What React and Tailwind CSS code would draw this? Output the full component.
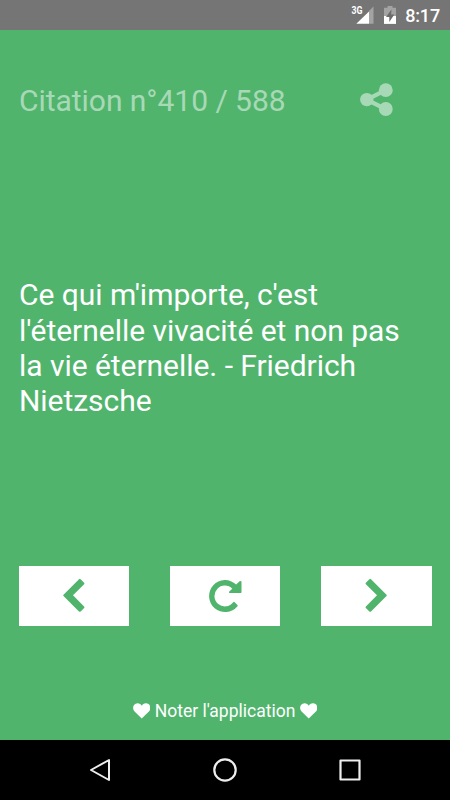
function StatusBar() {
  return (
    <header className="flex h-[30px] items-center justify-end bg-[#757575] pr-[10px] text-white">
      <svg width="50" height="30" viewBox="0 0 50 30" role="img" aria-label="3G, batterie en charge">
        <path d="M22.500 6.500L18 11V23.700H22.500Z" fill="#a3a3a3" />
        <path d="M18 11.500V23.700H5.300Z" fill="#fff" />
        <text x="0.500" y="14" fill="#fff" fontSize="10" fontWeight="700" textLength="11" lengthAdjust="spacingAndGlyphs" className="font-[Roboto]">3G</text>
        <path d="M36.500 6H41.500V7.700H45V16H33V7.700H36.500Z" fill="#a3a3a3" />
        <path d="M33 16H45V23.900H33Z" fill="#fff" />
        <path d="M40.500 9.500L35 17H38.300V22L43.300 14.600H40.100Z" fill="#6b6b6b" />
      </svg>
      <span className="ml-[4px] pt-[2px] text-[18px] leading-[28px] font-medium tracking-[-0.15px]">8:17</span>
    </header>
  );
}

function ShareIcon() {
  return (
    <svg width="34" height="34" viewBox="0 0 34 34" fill="#a8d9b6" aria-hidden="true">
      <path d="M25.700 7.200L6.700 16.700L25.700 26.200" fill="none" stroke="#a8d9b6" strokeWidth="4.200" />
      <circle cx="6.800" cy="16.600" r="6.700" />
      <circle cx="25.800" cy="7.200" r="6.900" />
      <circle cx="25.800" cy="26" r="6.900" />
    </svg>
  );
}

function ChevronLeft() {
  return (
    <svg width="22" height="36" viewBox="0 0 22 36" fill="#51b46d" aria-hidden="true">
      <path d="M0.500 16.700L16 1.200Q16.800 0.500 17.600 1.200L21.100 4.700Q21.800 5.500 21.100 6.300L10 17.300L21.100 28.400Q21.800 29.200 21.100 30L17.600 33.500Q16.800 34.200 16 33.500L0.500 18Q-0.100 17.350 0.500 16.700Z" />
    </svg>
  );
}

function Reload() {
  return (
    <svg width="34" height="34" viewBox="0 0 34 34" fill="#51b46d" aria-hidden="true">
      <path d="M27.200 5.600A16 16 0 1 0 28.500 27.200Q29 26.500 28.400 25.900L25.700 23.200Q24.900 22.500 24.200 23.200A10.400 10.400 0 1 1 23.300 9.700L20.300 12.500Q19.800 13.100 20.300 14.100H31.300Q32.500 14.100 32.500 12.900V2.600Q31.500 1.600 30.600 2.300Z" />
    </svg>
  );
}

function NavButton({ label, children }) {
  return (
    <button type="button" aria-label={label} className="flex h-[60px] w-[110.500px] items-center justify-center bg-white">
      {children}
    </button>
  );
}

function Heart() {
  return (
    <svg width="17.500" height="16" viewBox="0 0 18 16" fill="#fff" aria-hidden="true">
      <path d="M9 15.700L1.600 8.400C-1.100 5.400 0 0.200 4.700 0.100C6.700 0.100 8.300 1.500 9 2.600C9.700 1.500 11.300 0.100 13.300 0.100C18 0.200 19.100 5.400 16.400 8.400Z" />
    </svg>
  );
}

export default function App() {
  return (
    <div className="flex h-[800px] w-[450px] flex-col overflow-hidden bg-[#51b46d] font-[Roboto,sans-serif] text-white">
      <StatusBar />
      <main className="flex h-[710px] flex-col">
        <div className="flex h-[140px] items-center justify-between pr-[56px] pl-[19px]">
          <h1 className="pt-px text-[30px] leading-[35px] tracking-[-0.04px] text-[#a8d9b6]">Citation n°410 / 588</h1>
          <button type="button" aria-label="Partager"><ShareIcon /></button>
        </div>
        <div className="flex h-[356px] items-center pl-[19px]">
          <p className="text-[30px] leading-[35.300px] tracking-[-0.04px] whitespace-nowrap">
            Ce qui m'importe, c'est<br />
            l'éternelle vivacité et non pas<br />
            la vie éternelle. - Friedrich<br />
            Nietzsche
          </p>
        </div>
        <div className="mt-[40px] flex justify-between pr-[18.500px] pl-[18.500px]">
          <NavButton label="Précédente"><span className="pl-[0.500px]"><ChevronLeft /></span></NavButton>
          <NavButton label="Aléatoire"><span className="pl-[1.500px]"><Reload /></span></NavButton>
          <NavButton label="Suivante"><span className="pr-px"><span className="block -scale-x-100"><ChevronLeft /></span></span></NavButton>
        </div>
        <button type="button" className="mt-[73px] flex items-center justify-center gap-[4.500px] text-[17.500px] leading-[22px]">
          <Heart /><span className="pt-px">Noter l'application</span><Heart />
        </button>
      </main>
      <nav className="flex h-[60px] items-center justify-between bg-black px-[88px]">
        <svg width="24" height="28" viewBox="0 0 24 28" fill="none" stroke="#eee" strokeWidth="2" strokeLinejoin="round" aria-label="Retour">
          <path d="M21 4V24L3 14Z" />
        </svg>
        <svg width="26" height="26" viewBox="0 0 26 26" fill="none" stroke="#eee" strokeWidth="2.200" aria-label="Accueil">
          <circle cx="13" cy="13" r="10.700" />
        </svg>
        <svg width="24" height="24" viewBox="0 0 24 24" fill="none" stroke="#eee" strokeWidth="2.200" strokeLinejoin="round" aria-label="Applications récentes">
          <rect x="2.500" y="2.500" width="19" height="19" />
        </svg>
      </nav>
    </div>
  );
}
